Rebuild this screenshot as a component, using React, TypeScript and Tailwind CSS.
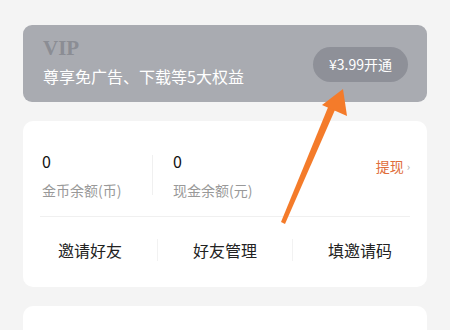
import React from "react";

// ─── VIP banner ───────────────────────────────────────────────────────────────
function VipCard() {
  return (
    <div className="h-[77px] rounded-[9px] bg-[#a9abb1] flex items-center justify-between pl-[20px] pr-[19px]">
      <div className="flex flex-col">
        <span className="font-['Liberation_Serif',serif] font-bold text-[21px] leading-[22px] text-[#8b8d94] mt-[-4px]">
          VIP
        </span>
        <span className="text-[16px] leading-[22px] text-white mt-[6px]">
          尊享免广告、下载等5大权益
        </span>
      </div>
      <button className="h-[35px] px-[16px] rounded-full bg-[#8e9098] text-white text-[14px] leading-none mt-[1px]">
        ¥3.99开通
      </button>
    </div>
  );
}

// ─── Balance card ─────────────────────────────────────────────────────────────
function BalanceCard() {
  return (
    <div className="h-[166px] rounded-[10px] bg-white flex flex-col">
      <div className="flex items-center pl-[19px] pr-[17px] pt-[29px]">
        <div className="w-[110px] flex flex-col">
          <span className="text-[16px] leading-[22px] text-[#111]">0</span>
          <span className="text-[14px] leading-[20px] text-[#999] mt-[8px]">金币余额(币)</span>
        </div>
        <div className="w-px h-[40px] bg-[#f0f0f0]" />
        <div className="flex-1 flex flex-col pl-[20px]">
          <span className="text-[16px] leading-[22px] text-[#111]">0</span>
          <span className="text-[14px] leading-[20px] text-[#999] mt-[8px]">现金余额(元)</span>
        </div>
        <div className="self-start mt-[6px] flex items-center gap-[3px] text-[14px] leading-[20px] text-[#df6d3a]">
          提现
          <span className="text-[11px] text-[#aaa]">›</span>
        </div>
      </div>
      <div className="mx-[17px] mt-[16px] h-px bg-[#f0f0f0]" />
      <div className="flex items-center flex-1 pb-[4px]">
        {["邀请好友", "好友管理", "填邀请码"].map((t, i) => (
          <React.Fragment key={t}>
            {i > 0 && <div className="w-px h-[22px] bg-[#f2f2f2]" />}
            <div className="flex-1 text-center text-[16px] text-[#222]">{t}</div>
          </React.Fragment>
        ))}
      </div>
    </div>
  );
}

// ─── Annotation arrow ─────────────────────────────────────────────────────────
function Arrow() {
  return (
    <svg className="absolute left-0 top-0 pointer-events-none" width="450" height="330">
      <polygon points="281,222 285,224 338,103 331,100" fill="#f47b2a" />
      <polygon points="343,89 322,105 347,116" fill="#f47b2a" />
    </svg>
  );
}

export default function App() {
  return (
    <div className="relative w-[450px] h-[330px] overflow-hidden bg-[#f4f4f4] font-['Noto_Sans_CJK_SC','Noto_Sans',sans-serif]">
      <div className="flex flex-col gap-[19px] px-[23px] pt-[25px]">
        <VipCard />
        <BalanceCard />
        <div className="h-[80px] rounded-[10px] bg-white" />
      </div>
      <Arrow />
    </div>
  );
}
